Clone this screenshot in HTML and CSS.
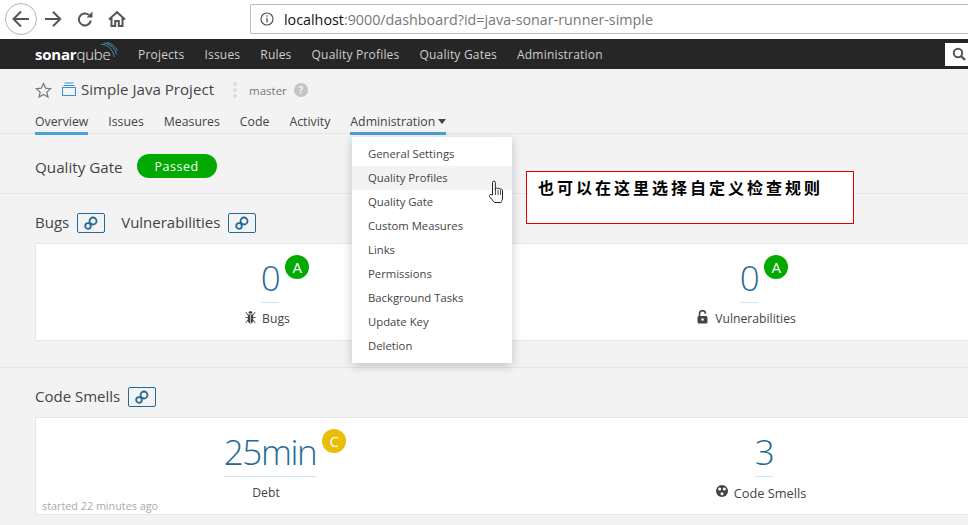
FILE: index.html
```html
<!DOCTYPE html>
<html lang="en">
<head>
<meta charset="utf-8">
<title>Simple Java Project</title>
<link rel="stylesheet" href="styles.css">
</head>
<body>
<header class="browser">
  <div class="browser-btns">
    <span class="back">
      <svg width="20" height="20" viewBox="0 0 20 20"><path d="M18 10H3M10 2.500 2.500 10l7.500 7.500" class="chrome-stroke"/></svg>
    </span>
    <svg class="fwd" width="18" height="18" viewBox="0 0 18 18"><path d="M1 9h15M9 1.800 16.200 9 9 16.200" class="chrome-stroke"/></svg>
    <svg class="reload" width="17" height="17" viewBox="0 0 17 17"><path d="M13.800 9.500A6 6 0 1 1 12 4" class="chrome-stroke"/><path d="M9.500 6.500h6v-6z" class="chrome-fill"/></svg>
    <svg class="home" width="18" height="18" viewBox="0 0 18 18"><path d="M1 9.500 9 2l8 7.500M3.500 8v8h3.700v-5h3.600v5h3.700V8" class="chrome-stroke"/></svg>
  </div>
  <div class="urlbar">
    <svg width="14" height="14" viewBox="0 0 14 14"><circle cx="7" cy="7" r="6" fill="none" stroke="#555" stroke-width="1.200"/><path d="M7 6v4.500M7 3.300v1.500" stroke="#555" stroke-width="1.300"/></svg>
    <span class="url"><b class="url-host">localhost</b>:9000/dashboard?id=java-sonar-runner-simple</span>
  </div>
</header>

<nav class="topnav">
  <a class="logo"><b>sonar</b>qube<svg width="20" height="18" viewBox="0 0 20 18"><path d="M0 2.500C7 2.500 13 7 15.500 17M3 .8C10 1.500 16 6.500 17.800 14M7 .3C12 1.500 17 5 19 10" fill="none" stroke="#4b9fd5" stroke-width="1"/></svg></a>
  <a>Projects</a><a>Issues</a><a>Rules</a><a>Quality Profiles</a><a>Quality Gates</a><a>Administration</a>
  <span class="search"><svg width="14" height="14" viewBox="0 0 14 14"><circle cx="6" cy="6" r="4.200" fill="none" stroke="#555" stroke-width="2"/><path d="m9 9 4 4" stroke="#555" stroke-width="2.400"/></svg></span>
</nav>

<section class="project">
  <div class="project-title">
    <svg class="star" width="17" height="17" viewBox="0 0 17 17"><path d="M8.500 1.500 10.600 6.200l5.100.5-3.900 3.400 1.200 5-4.500-2.700L4 15.100l1.200-5L1.300 6.700l5.100-.5z" fill="none" stroke="#777" stroke-width="1.200"/></svg>
    <svg class="qualifier" width="14" height="14" viewBox="0 0 14 14"><path d="M.5 5.500h13v8H.5zM1.500 3.500h11M2.500 1h9" fill="none" stroke="#3a93d0" stroke-width="1.100"/></svg>
    <span class="name">Simple Java Project</span>
    <svg class="branch" width="6" height="18" viewBox="0 0 6 18"><g fill="none" stroke="#d4d4d4"><circle cx="3" cy="3" r="1.500"/><circle cx="3" cy="9" r="1.500"/><circle cx="3" cy="15" r="1.500"/></g></svg>
    <span class="branch-name">master</span>
    <span class="help">?</span>
  </div>
  <div class="tabs">
    <a class="active">Overview</a><a>Issues</a><a>Measures</a><a>Code</a><a>Activity</a><a class="active">Administration<i class="caret"></i></a>
  </div>
</section>

<main class="content">
  <div class="gate">
    <span class="gate-title">Quality Gate</span>
    <span class="pill">Passed</span>
  </div>

  <section class="domain domain-rule">
    <div class="heading">
      <h2>Bugs</h2>
      <span class="bubble"><svg width="16" height="16" viewBox="0 0 16 16"><circle cx="10" cy="6" r="3.500" fill="none" stroke="#236a97" stroke-width="1.800"/><circle cx="5" cy="11" r="2.800" fill="none" stroke="#236a97" stroke-width="1.800"/></svg></span>
      <h2 class="h-next">Vulnerabilities</h2>
      <span class="bubble"><svg width="16" height="16" viewBox="0 0 16 16"><circle cx="10" cy="6" r="3.500" fill="none" stroke="#236a97" stroke-width="1.800"/><circle cx="5" cy="11" r="2.800" fill="none" stroke="#236a97" stroke-width="1.800"/></svg></span>
    </div>
    <div class="card">
      <div class="measure">
        <div class="value">0<span class="rating green">A</span></div>
        <div class="label label-bugs">
          <svg class="bug" width="11" height="14" viewBox="0 0 13 14" preserveAspectRatio="none"><path d="M4 3.500a2.500 2.500 0 0 1 5 0zM3.300 4.500h6.400V10c0 2-1.400 3.500-3.200 3.500S3.300 12 3.300 10z" fill="#444"/><path d="M1 2l2.300 3M12 2 9.700 5M.5 7.500h2.800M12.500 7.500H9.700M1 13l2.300-3M12 13l-2.300-3" stroke="#444" fill="none"/><path d="M6.500 5v8" stroke="#fff" stroke-width=".7"/></svg>
          <span>Bugs</span>
        </div>
      </div>
      <div class="measure measure-vuln">
        <div class="value">0<span class="rating green">A</span></div>
        <div class="label">
          <svg class="lock" width="11" height="14" viewBox="0 0 11 14"><path d="M2.500 6.500V3.700a3 3 0 0 1 6 0" fill="none" stroke="#444" stroke-width="1.600"/><rect x=".5" y="6" width="10" height="7.500" rx="1.500" fill="#444"/><circle cx="5.500" cy="9.500" r="1.300" fill="#fff"/></svg>
          <span>Vulnerabilities</span>
        </div>
      </div>
    </div>
  </section>

  <section class="domain">
    <div class="heading">
      <h2>Code Smells</h2>
      <span class="bubble"><svg width="16" height="16" viewBox="0 0 16 16"><circle cx="10" cy="6" r="3.500" fill="none" stroke="#236a97" stroke-width="1.800"/><circle cx="5" cy="11" r="2.800" fill="none" stroke="#236a97" stroke-width="1.800"/></svg></span>
    </div>
    <div class="card">
      <div class="measure">
        <div class="value">25min<span class="rating yellow">C</span></div>
        <div class="label label-debt"><span>Debt</span></div>
      </div>
      <div class="measure measure-smell">
        <div class="value">3</div>
        <div class="label label-smell">
          <svg class="smell" width="12" height="12" viewBox="0 0 12 12"><circle cx="6" cy="6" r="6" fill="#444"/><circle cx="3.700" cy="4" r="1.500" fill="#fff"/><circle cx="8.300" cy="4" r="1.500" fill="#fff"/><circle cx="6" cy="8.700" r="1.500" fill="#fff"/></svg>
          <span>Code Smells</span>
        </div>
      </div>
      <span class="started">started 22 minutes ago</span>
    </div>
  </section>
</main>

<ul class="menu">
  <li>General Settings</li>
  <li class="hover">Quality Profiles</li>
  <li>Quality Gate</li>
  <li>Custom Measures</li>
  <li>Links</li>
  <li>Permissions</li>
  <li>Background Tasks</li>
  <li>Update Key</li>
  <li>Deletion</li>
</ul>

<svg class="cursor" width="18" height="26" viewBox="0 0 16 26"><path d="M4.500 15V2.500a1.400 1.400 0 0 1 2.800 0V10l.2-1.500c.8-.8 2-.6 2.400.3.800-.8 2-.5 2.300.5.800-.6 2.300-.3 2.300 1.200v7.500c0 2-.8 3-1.500 4.500H6.500L1.800 17c-1.200-1.800.8-3.300 2.700-2z" fill="#fff" stroke="#222" stroke-width="1"/><path d="M7.500 10v5M10 9.500V15M12.500 10v5" stroke="#222" stroke-width=".8"/></svg>

<div class="note">也可以在这里选择自定义检查规则</div>
</body>
</html>
```
FILE: styles.css
```css
* { box-sizing: border-box; }
html, body { margin: 0; height: 525px; overflow: hidden; }
body {
  width: 968px;
  position: relative;
  background: #f3f3f3;
  color: #444;
  font-family: "Open Sans", "Noto Sans", sans-serif;
  font-size: 12px;
}
h2 { margin: 0; font-weight: 400; font-size: 15px; line-height: 18px; }

/* browser chrome */
.browser {
  height: 39px;
  background: #fff;
  display: flex;
  align-items: flex-start;
  padding: 4px 0 0 5px;
}
.browser-btns { display: flex; align-items: center; height: 30px; width: 245px; flex: none; }
.back {
  width: 32px; height: 32px;
  flex: none;
  border: 1px solid #b5b5b5;
  border-radius: 50%;
  display: flex; align-items: center; justify-content: center;
}
.fwd { margin-left: 7px; }
.reload { margin-left: 15px; }
.home { margin-left: 14px; }
.chrome-stroke { fill: none; stroke: #555; stroke-width: 2; }
.chrome-fill { fill: #555; }
.urlbar {
  flex: 1;
  height: 30px;
  background: #fff;
  border: 1px solid #bdbdbd;
  border-right: 0;
  border-radius: 2px 0 0 2px;
  display: flex; align-items: center;
  padding-left: 9px;
  gap: 10px;
}
.url { font-size: 14.300px; color: #777; white-space: nowrap; }
.url-host { font-weight: 400; color: #111; }

/* top navigation */
.topnav {
  height: 30px;
  background: #262626;
  display: flex;
  align-items: center;
  padding-left: 35px;
  gap: 20px;
}
.topnav a { color: #cfcfcf; font-size: 12px; letter-spacing: .2px; white-space: nowrap; }
.topnav .logo {
  display: flex; align-items: center;
  color: #eee;
  font-size: 15px; letter-spacing: -.2px;
  font-weight: 300;
  width: 83px;
}
.logo b { font-weight: 700; color: #fff; }
.logo svg { margin: -8px 0 0 -10px; }
.search {
  margin-left: auto;
  width: 23px; height: 23px;
  background: #fff;
  display: flex; align-items: center;
  padding-left: 7px;
}

/* project header */
.project { height: 65px; border-bottom: 1px solid #e6e6e6; padding: 9px 0 0 35px; }
.project-title { display: flex; align-items: center; height: 24px; }
.star { margin-right: 10px; }
.qualifier { margin-right: 5px; margin-top: -3px; }
.name { font-size: 15.100px; line-height: 22px; margin-top: -2px; color: #444; }
.branch { margin-left: 18px; }
.branch-name { margin-left: 11px; color: #777; font-size: 11.500px; }
.help {
  width: 14px; height: 14px;
  margin-left: 7px;
  border-radius: 50%;
  background: #c4c4c4;
  color: #f3f3f3;
  font-weight: 700; font-size: 11px; line-height: 14px;
  text-align: center;
}
.tabs { display: flex; gap: 20px; margin-top: 8px; }
.tabs a {
  display: block;
  height: 25px;
  padding-top: 2px;
  line-height: 20px;
  font-size: 12.300px;
  color: #444;
  border-bottom: 3px solid transparent;
  white-space: nowrap;
}
.tabs a.active { border-bottom-color: #4b9fd5; }
.caret {
  display: inline-block;
  margin-left: 3px;
  vertical-align: 2px;
  border: 4.500px solid transparent;
  border-top: 5px solid #444;
  border-bottom: 0;
}

/* dashboard */
.gate {
  height: 60px;
  padding: 20px 0 0 35px;
  display: flex; align-items: flex-start;
  border-bottom: 1px solid #e6e6e6;
}
.gate-title { font-size: 15.200px; line-height: 26px; margin-right: 14px; }
.pill {
  width: 80px; height: 24px;
  border-radius: 12px;
  background: #00aa00;
  color: #fff;
  text-align: center;
  font-size: 12.500px; line-height: 26px; letter-spacing: .5px;
}
.domain { padding: 19px 0 0 35px; }
.domain-rule { height: 174px; border-bottom: 1px solid #e6e6e6; }
.heading { display: flex; align-items: flex-start; height: 20px; margin-bottom: 10px; }
.heading h2 { white-space: nowrap; }
.h-next { margin-left: 16px; }
.bubble {
  width: 28px; height: 20px;
  margin-left: 8px;
  border: 1px solid #236a97;
  border-radius: 2px;
  display: flex; align-items: center; justify-content: center;
}
.card {
  width: 933px;
  height: 98px;
  background: #fff;
  border: 1px solid #e6e6e6;
  border-right: 0;
  display: grid;
  grid-template-columns: 468px 454px;
  column-gap: 10px;
  position: relative;
}
.measure { display: flex; flex-direction: column; align-items: center; padding-top: 13px; }
.measure-vuln { padding-left: 16px; }
.measure-smell { padding-left: 46px; }
.value {
  position: relative;
  padding-bottom: 3px;
  border-bottom: 1px solid #cde6f4;
  font-size: 35px; line-height: 42px; font-weight: 300;
  letter-spacing: -1.400px;
  color: #236a97;
  text-align: center;
}
.rating {
  position: absolute;
  left: calc(100% + 6px); top: -2px;
  width: 24px; height: 24px;
  border-radius: 50%;
  color: #fff;
  font-size: 15px; line-height: 24px; font-weight: 400;
  letter-spacing: 0;
  text-align: center;
}
.green { background: #00aa00; }
.yellow { background: #eabe06; }
.label {
  display: flex; align-items: center; gap: 7px;
  margin-top: 7px;
  height: 17px;
  font-size: 12.200px;
  margin-left: -5px;
}
.label svg { margin-top: -4px; }
.label-bugs { gap: 6px; }
.label-debt { margin-left: -8px; }
.label-smell { gap: 6px; font-size: 12.800px; margin-left: -6px; }
.started { position: absolute; left: 6px; bottom: 1px; font-size: 10.800px; color: #aaa; }

/* dropdown */
.menu {
  position: absolute;
  left: 352px; top: 137px;
  width: 160px;
  margin: 0; padding: 5px 0;
  list-style: none;
  background: #fff;
  box-shadow: 0 3px 10px rgba(0,0,0,.2);
}
.menu li { height: 24px; line-height: 24px; padding-left: 16px; font-size: 11.300px; white-space: nowrap; }
.menu li.hover { background: #f3f3f3; }
.cursor { position: absolute; left: 487px; top: 180px; }

/* annotation */
.note {
  position: absolute;
  left: 526px; top: 171px;
  width: 328px; height: 53px;
  padding: 3px 0 0 11px;
  background: #fff;
  border: 1px solid #e00000;
  color: #000;
  font-family: "Noto Sans CJK SC", sans-serif;
  font-size: 16px; font-weight: 700; line-height: 24px;
  letter-spacing: 3px;
  white-space: nowrap;
}
```
